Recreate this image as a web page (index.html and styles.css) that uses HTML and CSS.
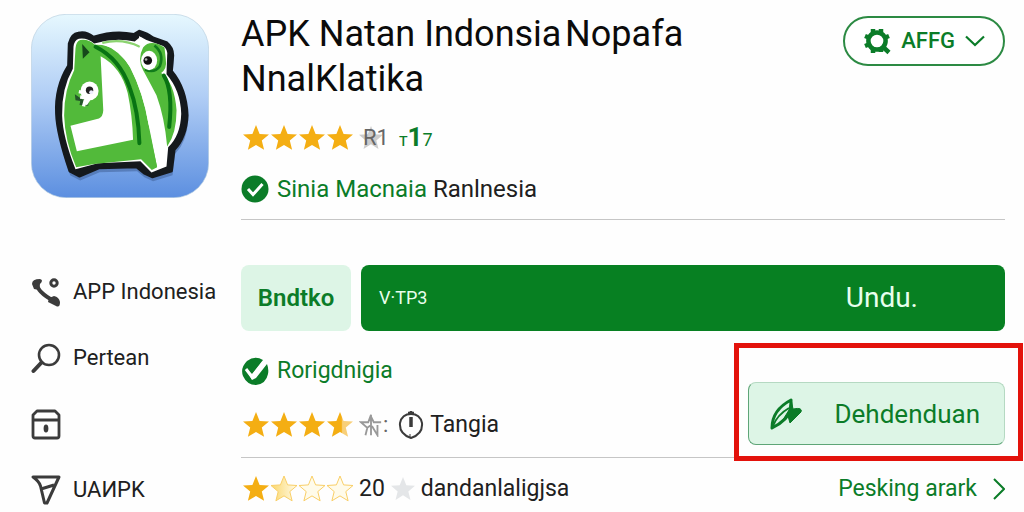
FILE: index.html
```html
<!DOCTYPE html>
<html lang="id">
<head>
    <meta charset="UTF-8">
    <meta name="viewport" content="width=device-width, initial-scale=1.0">
    <title>APK Natan Indonesia</title>
    <link rel="stylesheet" href="styles.css">
</head>
<body>
    <svg class="defs" width="0" height="0" aria-hidden="true">
        <defs>
            <linearGradient id="most"><stop offset="55%" stop-color="#f4ae13"/><stop offset="60%" stop-color="#f8cf78"/></linearGradient>
            <linearGradient id="pale"><stop offset="0" stop-color="#fbd76c"/><stop offset="1" stop-color="#fffbe8"/></linearGradient>
            <symbol id="star" viewBox="0 0 26 26">
                <path d="M13 0l3.600 8.900 9.400.6-7.200 6.100 2.300 9.200L13 19.900l-8.100 4.900 2.300-9.200L0 9.500l9.400-.6z"/>
            </symbol>
        </defs>
    </svg>

    <div class="container">
        <aside class="sidebar">
            <svg class="app-icon" viewBox="35 42 532 550" role="img" aria-label="Ikon aplikasi">
                <defs>
                    <linearGradient id="sky" x1="0" y1="0" x2="0" y2="1">
                        <stop offset="0" stop-color="#e6f8fe"/>
                        <stop offset=".45" stop-color="#b0cdf5"/>
                        <stop offset="1" stop-color="#5c8fe0"/>
                    </linearGradient>
                </defs>
                <rect x="36" y="43" width="530" height="548" rx="104" fill="url(#sky)" stroke="#b9cfe0" stroke-width="2"/>
                <path d="M176 98Q200 92 222 110Q285 90 342 102L358 92Q385 100 400 112L440 126Q460 142 460 166L456 212Q500 265 503 345Q500 410 464 448L456 512L398 530L372 518L350 500L238 503L180 528L150 512Q112 400 110 340Q106 260 146 196L148 130Q156 100 176 98Z" fill="#3c5c91" opacity=".5" transform="translate(2 12)"/>
                <path d="M176 98Q200 92 222 110Q285 90 342 102L358 92Q385 100 400 112L440 126Q460 142 460 166L456 212Q500 265 503 345Q500 410 464 448L456 512L398 530L372 518L350 500L238 503L180 528L150 512Q112 400 110 340Q106 260 146 196L148 130Q156 100 176 98Z" fill="#15191d" stroke="#15191d" stroke-width="6" stroke-linejoin="round"/>
                <path d="M178 116Q202 112 224 130Q285 112 345 124L362 110L380 120L430 138Q444 148 442 166L440 222Q482 270 484 340Q482 405 445 440L440 498L395 516L362 482L235 488L168 506Q130 410 128 345Q126 265 160 206L162 140Q164 120 178 116Z" fill="#fff"/>
                <path d="M182 120Q206 116 226 134Q300 170 340 262Q372 350 390 398L412 500L396 508L364 476L224 490L170 500Q136 420 134 345Q134 268 164 210L168 144Q170 124 182 120Z" fill="#52ba3a"/>
                <path d="M226 134Q290 130 330 200Q372 280 386 370L412 500L360 430Z" fill="#52ba3a"/>
                <path d="M243 168Q304 200 324 278Q338 345 340 418L172 452L153 376L238 354Q250 350 251 330Z" fill="#fff"/>
                <path d="M228 140Q300 176 330 262Q356 330 359 428" fill="none" stroke="#087313" stroke-width="12" stroke-linecap="round"/>
                <path d="M248 132Q310 122 360 142Q346 160 370 220Q400 275 414 335Q430 410 438 485L416 500Q404 430 386 370Q370 280 334 205Q300 150 248 132Z" fill="#fff"/>
                <path d="M248 128Q310 114 360 140" fill="none" stroke="#8bd36f" stroke-width="7"/>
                <path d="M370 142Q392 116 434 142L438 178Q442 206 424 218Q464 246 470 330Q470 400 442 438Q434 350 410 285Q384 235 370 210Q352 176 370 142Z" fill="#52ba3a"/>
                <path d="M432 226Q460 270 448 380" fill="none" stroke="#087313" stroke-width="12" stroke-linecap="round"/>
                <path d="M404 136Q434 160 420 198Q404 220 376 208" fill="none" stroke="#117b1b" stroke-width="8"/>
                <ellipse cx="388" cy="181" rx="24" ry="29" fill="#fff"/>
                <circle cx="384" cy="181" r="13" fill="#111"/>
                <circle cx="379" cy="178" r="4" fill="#aaa"/>
                <path d="M358 108l24 18-24 10z" fill="#fff"/>
                <path d="M188 132l22 24-20 20z" fill="#16471b"/>
                <path d="M166 282l24 16 20-26-4 44-26-2 2-12-14-2z" fill="#24562a"/>
                <ellipse cx="210" cy="272" rx="27" ry="28" fill="#fff"/>
                <path d="M188 276l-10-2M198 292l-16-2M200 290l-8 28M210 294l-12 18" stroke="#fff" stroke-width="10"/>
                <circle cx="210" cy="270" r="11" fill="#222"/>
                <circle cx="215" cy="276" r="6" fill="#eef"/>
            </svg>

            <nav class="menu">
                <a href="#app">
                    <svg viewBox="0 0 30 32" fill="none" stroke="#3b3b3b">
                        <path d="M6 7.500Q6 16 23 25" stroke-width="4"/>
                        <path d="M1 8Q1 3 9 3Q13 4 9 8L8 14L3 13ZM18 22L23 20Q28 21 29 26Q29 32 25 30L17 26Z" fill="#3b3b3b" stroke="none"/>
                        <circle cx="23" cy="7" r="3.200" stroke-width="3"/>
                    </svg>
                    APP Indonesia
                </a>
                <a href="#cari">
                    <svg viewBox="0 0 30 32" fill="none" stroke="#3b3b3b">
                        <circle cx="18" cy="13" r="10" stroke-width="2.600"/>
                        <path d="M10.500 20.500L2.500 29" stroke-width="4" stroke-linecap="round"/>
                    </svg>
                    Pertean
                </a>
                <a href="#arsip" aria-label="Arsip">
                    <svg viewBox="0 0 30 32" fill="none" stroke="#3b3b3b" stroke-width="2.800">
                        <path d="M6 3H24L28 7V28Q28 30 26 30H4Q2 30 2 28V7ZM2 12H28" stroke-linejoin="round"/>
                        <ellipse cx="15" cy="20.500" rx="1" ry="2.500"/>
                    </svg>
                </a>
                <a href="#unapk">
                    <svg viewBox="0 0 30 32" fill="none" stroke="#3b3b3b" stroke-width="3" stroke-linejoin="round">
                        <path d="M2 3H28L16 29H13.500L9.500 12Q8 7 2 3ZM10 15L23 11"/>
                    </svg>
                    UAИPK
                </a>
            </nav>
        </aside>

        <main class="content">
            <header>
                <h1>APK Natan Indonsia&#8202;Nopafa<br>NnalKlatika</h1>
                <button type="button" class="account">
                    <svg class="gear" viewBox="0 0 28 28" fill="none" stroke="#0b7c28">
                        <path d="M10 2v6M18 2v6M10 20v6M18 20v5M2 9l5 2M26 9l-5 2M2 19l5-2M19 19l7 6.500" stroke-width="4.500"/>
                        <circle cx="14" cy="14" r="8.600" stroke-width="4.500"/>
                    </svg>
                    AFFG
                    <svg class="chevron" viewBox="0 0 20 12" fill="none" stroke="#0b7c28" stroke-width="2.200"><path d="M1 1.500l9 8.500 9-8.500"/></svg>
                </button>
            </header>

            <div class="row rating">
                <span class="stars">
                    <svg><use href="#star"/></svg><svg><use href="#star"/></svg><svg><use href="#star"/></svg><svg><use href="#star"/></svg>
                </span>
                <span class="count"><svg class="grey"><use href="#star"/></svg>R1</span>
                <span class="age">т<b>1</b>7</span>
            </div>

            <div class="row verified">
                <svg class="check" viewBox="0 0 28 28"><circle cx="14" cy="14" r="13.500" fill="#0b7c28"/><path d="M7 14l5 5.500L21.500 9" fill="none" stroke="#fff" stroke-width="3"/></svg>
                <span><span class="green">Sinia Macnaia</span> Ranlnesia</span>
            </div>

            <hr>

            <div class="actions">
                <button type="button" class="light">Bndtko</button>
                <button type="button" class="install"><small>V·TP3</small><span>Undu.</span></button>
            </div>

            <div class="details">
                <div class="facts">
                    <div class="row verified">
                        <svg class="check" viewBox="0 0 28 28">
                            <path d="M22 3Q14-2 6 4Q-1 11 2 19Q6 28 15 28Q25 27 27 17Q28 12 26 7L15 21L11 23L5 12L11 17Z" fill="#0b7c28"/>
                            <path d="M5 12l6 8L23 5" fill="none" stroke="#fff" stroke-width="3"/>
                        </svg>
                        <span class="green">Rorigdnigia</span>
                    </div>
                    <div class="row rating">
                        <span class="stars">
                            <svg><use href="#star"/></svg><svg><use href="#star"/></svg><svg><use href="#star"/></svg><svg fill="url(#most)"><use href="#star"/></svg>
                        </span>
                        <span class="count"><svg viewBox="0 0 26 26" class="outline"><path d="M7 24L9 16 2 10H10L13 2V15M13 4L16 10H24M9 16L13 13V24M14 14L20 24V13"/></svg>:</span>
                        <svg class="timer" viewBox="0 0 26 30" fill="none" stroke="#3b3b3b">
                            <path d="M13 4Q4 4 2 13Q1 24 13 28Q25 24 24 13Q22 4 13 4Z" stroke-width="2"/>
                            <path d="M13 1V5M10 3h6" stroke-width="2.500"/>
                            <path d="M13 7v10" stroke-width="3.500"/>
                            <path d="M12 24v3" stroke-width="1"/>
                        </svg>
                        <span>Tangia</span>
                    </div>
                </div>
                <div class="highlight">
                    <button type="button" class="light wide">
                        <svg viewBox="0 0 34 34" fill="none" stroke="#0b7c28" stroke-width="3" stroke-linejoin="round">
                            <path d="M3 31Q3 13 22 3V12Q19 23 3 31Z"/>
                            <path d="M4 29Q8 18 20 11" stroke-width="2"/>
                            <path d="M22 2L24 12Q34 10 32 15L21 26L19 19L12 26L20 13Z" fill="#0b7c28" stroke-width="1"/>
                        </svg>
                        <span>Dehdenduan</span>
                    </button>
                </div>
            </div>

            <hr>

            <div class="row rating last">
                <span class="stars">
                    <svg><use href="#star"/></svg><svg class="pale" fill="url(#pale)"><use href="#star"/></svg><svg class="pale empty"><use href="#star"/></svg><svg class="pale empty"><use href="#star"/></svg>
                </span>
                <span>20</span>
                <svg class="faint"><use href="#star"/></svg>
                <span>dandanlaligjsa</span>
                <a href="#semua" class="more">Pesking arark
                    <svg viewBox="0 0 12 22" fill="none" stroke="#0b7c28" stroke-width="2"><path d="M1 1l10 10L1 21"/></svg>
                </a>
            </div>
        </main>
    </div>
</body>
</html>
```
FILE: styles.css
```css
* {
    box-sizing: border-box;
}
body {
    margin: 0;
    background-color: #fefefe;
    color: #202020;
    font-family: Roboto, "Liberation Sans", sans-serif;
    font-size: 23px;
    line-height: 32px;
}
button {
    font: inherit;
    cursor: pointer;
}
svg {
    flex-shrink: 0;
}
a {
    color: inherit;
    text-decoration: none;
}
.defs {
    position: absolute;
}
.container {
    display: grid;
    grid-template-columns: 178px 1fr;
    gap: 32px;
    padding: 12px 19px 6px 31px;
}
.app-icon {
    display: block;
    width: 100%;
    margin-top: 2px;
}
.menu {
    display: flex;
    flex-direction: column;
    gap: 34px;
    margin-top: 78px;
    font-size: 22px;
}
.menu a {
    display: flex;
    align-items: center;
    gap: 12px;
    height: 32px;
    white-space: nowrap;
}
.menu svg {
    width: 30px;
    height: 32px;
}
.content {
    min-width: 0;
}
header {
    display: flex;
    justify-content: space-between;
    align-items: flex-start;
}
h1 {
    margin: 0;
    color: #0b0b0b;
    font-size: 36px;
    font-weight: 400;
    line-height: 45px;
}
.account {
    display: flex;
    align-items: center;
    gap: 10px;
    height: 50px;
    margin-top: 4px;
    padding: 0 18px;
    background-color: #fff;
    border: 2px solid #2c8a43;
    border-radius: 25px;
    color: #0b7c28;
    font-size: 22px;
    font-weight: 500;
}
.gear {
    width: 28px;
    height: 28px;
}
.chevron {
    width: 20px;
    height: 12px;
}
.row {
    display: flex;
    align-items: center;
    height: 32px;
}
.rating {
    gap: 6px;
}
header + .rating {
    margin-top: 20px;
}
.stars {
    display: flex;
    gap: 2px;
    margin-left: 2px;
    fill: #f4ae13;
}
.stars svg {
    width: 26px;
    height: 26px;
    overflow: visible;
}
.pale {
    stroke: #f9cf67;
    stroke-width: 1px;
}
.empty {
    fill: #fffbea;
}
.count {
    display: flex;
    align-items: center;
    color: #666;
    font-size: 22px;
}
.count svg {
    width: 24px;
    height: 24px;
}
.count .grey {
    margin-right: -20px;
    fill: #ccc;
}
.outline {
    fill: none;
    stroke: #999;
    stroke-width: 2px;
}
.age {
    margin-left: 4px;
    color: #0b7c28;
    font-size: 18px;
}
.age b {
    font-size: 26px;
}
.verified {
    gap: 8px;
}
.rating + .verified {
    margin-top: 19px;
    font-size: 24px;
}
.check {
    width: 28px;
    height: 28px;
}
.green {
    color: #0b7c28;
}
hr {
    height: 1px;
    margin: 14px 0 0;
    border: 0;
    background-color: #c6c6c6;
}
.actions {
    display: flex;
    gap: 10px;
    margin-top: 45px;
}
.light {
    width: 110px;
    height: 66px;
    padding: 0;
    border: 0;
    border-radius: 8px;
    background-color: #ddf5e6;
    color: #0b7c28;
    font-size: 24px;
    font-weight: 600;
}
.install {
    display: flex;
    flex: 1;
    justify-content: space-between;
    align-items: center;
    padding: 0 87px 0 18px;
    border: 0;
    border-radius: 8px;
    background-color: #078022;
    color: #e8ffed;
    font-size: 28px;
}
.install small {
    font-size: 18px;
}
.details {
    display: flex;
    justify-content: space-between;
    margin-top: 24px;
}
.facts {
    display: flex;
    flex-direction: column;
    gap: 22px;
}
.timer {
    width: 26px;
    height: 30px;
    margin-left: 4px;
}
.highlight {
    position: relative;
    padding-top: 27px;
}
/* red frame around the download button */
.highlight::after {
    content: "";
    position: absolute;
    inset: -12px -18px -16px -14px;
    border: 5px solid #e3120b;
    pointer-events: none;
}
.wide {
    display: flex;
    align-items: center;
    justify-content: space-between;
    width: 257px;
    height: 63px;
    padding: 0 24px 0 20px;
    border: 1px solid #b5d9c2;
    border-left-color: #5ea577;
    border-bottom-color: #5ea577;
    font-size: 26px;
    font-weight: 400;
}
.wide svg {
    width: 34px;
    height: 34px;
}
.details + hr {
    margin-top: 12px;
}
.last {
    margin-top: 15px;
}
.faint {
    width: 24px;
    height: 24px;
    fill: #e4e6e8;
}
.more {
    display: flex;
    align-items: center;
    gap: 16px;
    margin-left: auto;
    color: #0b7c28;
}
.more svg {
    width: 12px;
    height: 22px;
}
```
